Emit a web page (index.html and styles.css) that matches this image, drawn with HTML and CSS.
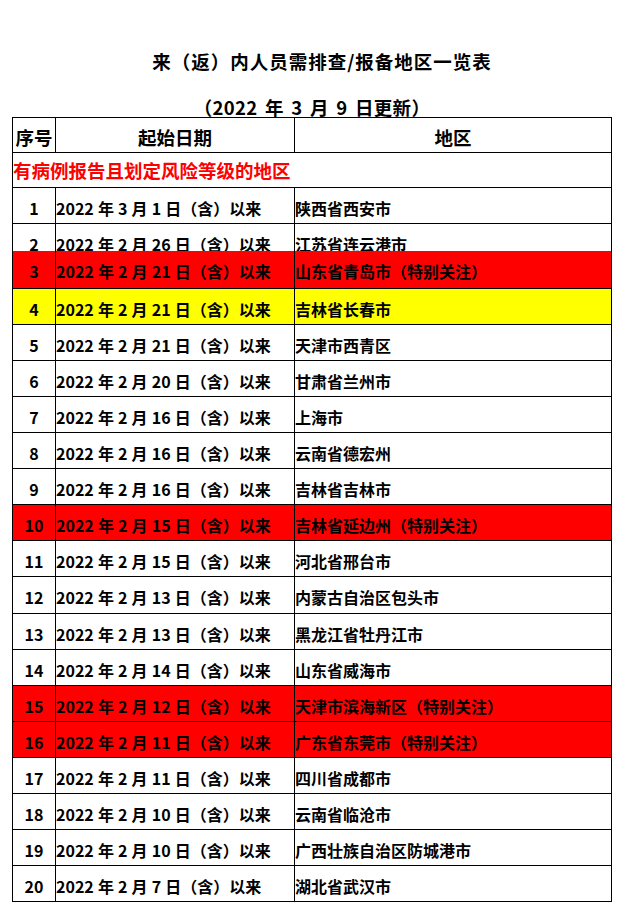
FILE: index.html
```html
<!DOCTYPE html>
<html lang="zh-CN">
<head>
<meta charset="utf-8">
<title>来（返）内人员需排查/报备地区一览表</title>
<link rel="stylesheet" href="styles.css">
</head>
<body>
<div class="page">
  <div class="title">来（返）内人员需排查/报备地区一览表</div>
  <div class="subtitle">（2022 年 3 月 9 日更新）</div>
  <div class="table">
    <div class="row head">
      <div class="cell c1">序号</div>
      <div class="cell c2">起始日期</div>
      <div class="cell c3">地区</div>
    </div>
    <div class="row section">
      <div class="cell full">有病例报告且划定风险等级的地区</div>
    </div>
    <div class="row"><div class="cell c1">1</div><div class="cell c2">2022 年 3 月 1 日（含）以来</div><div class="cell c3">陕西省西安市</div></div>
    <div class="row short"><div class="cell c1">2</div><div class="cell c2">2022 年 2 月 26 日（含）以来</div><div class="cell c3">江苏省连云港市</div></div>
    <div class="row red tall"><div class="cell c1">3</div><div class="cell c2">2022 年 2 月 21 日（含）以来</div><div class="cell c3">山东省青岛市（特别关注）</div></div>
    <div class="row yellow"><div class="cell c1">4</div><div class="cell c2">2022 年 2 月 21 日（含）以来</div><div class="cell c3">吉林省长春市</div></div>
    <div class="row"><div class="cell c1">5</div><div class="cell c2">2022 年 2 月 21 日（含）以来</div><div class="cell c3">天津市西青区</div></div>
    <div class="row"><div class="cell c1">6</div><div class="cell c2">2022 年 2 月 20 日（含）以来</div><div class="cell c3">甘肃省兰州市</div></div>
    <div class="row"><div class="cell c1">7</div><div class="cell c2">2022 年 2 月 16 日（含）以来</div><div class="cell c3">上海市</div></div>
    <div class="row"><div class="cell c1">8</div><div class="cell c2">2022 年 2 月 16 日（含）以来</div><div class="cell c3">云南省德宏州</div></div>
    <div class="row"><div class="cell c1">9</div><div class="cell c2">2022 年 2 月 16 日（含）以来</div><div class="cell c3">吉林省吉林市</div></div>
    <div class="row red"><div class="cell c1">10</div><div class="cell c2">2022 年 2 月 15 日（含）以来</div><div class="cell c3">吉林省延边州（特别关注）</div></div>
    <div class="row"><div class="cell c1">11</div><div class="cell c2">2022 年 2 月 15 日（含）以来</div><div class="cell c3">河北省邢台市</div></div>
    <div class="row plus"><div class="cell c1">12</div><div class="cell c2">2022 年 2 月 13 日（含）以来</div><div class="cell c3">内蒙古自治区包头市</div></div>
    <div class="row"><div class="cell c1">13</div><div class="cell c2">2022 年 2 月 13 日（含）以来</div><div class="cell c3">黑龙江省牡丹江市</div></div>
    <div class="row"><div class="cell c1">14</div><div class="cell c2">2022 年 2 月 14 日（含）以来</div><div class="cell c3">山东省威海市</div></div>
    <div class="row red"><div class="cell c1">15</div><div class="cell c2">2022 年 2 月 12 日（含）以来</div><div class="cell c3">天津市滨海新区（特别关注）</div></div>
    <div class="row red"><div class="cell c1">16</div><div class="cell c2">2022 年 2 月 11 日（含）以来</div><div class="cell c3">广东省东莞市（特别关注）</div></div>
    <div class="row"><div class="cell c1">17</div><div class="cell c2">2022 年 2 月 11 日（含）以来</div><div class="cell c3">四川省成都市</div></div>
    <div class="row"><div class="cell c1">18</div><div class="cell c2">2022 年 2 月 10 日（含）以来</div><div class="cell c3">云南省临沧市</div></div>
    <div class="row"><div class="cell c1">19</div><div class="cell c2">2022 年 2 月 10 日（含）以来</div><div class="cell c3">广西壮族自治区防城港市</div></div>
    <div class="row"><div class="cell c1">20</div><div class="cell c2">2022 年 2 月 7 日（含）以来</div><div class="cell c3">湖北省武汉市</div></div>
  </div>
</div>
</body>
</html>
```

FILE: styles.css
```css
html, body {
  margin: 0;
  padding: 0;
  background: #ffffff;
}

body {
  font-family: "Noto Sans CJK SC", "Noto Sans", sans-serif;
  font-weight: 700;
  color: #000000;
}

.page {
  width: 600px;
  margin-left: 12px;
  padding-top: 51px;
}

.title {
  font-size: 18.5px;
  line-height: 20px;
  height: 20px;
  text-align: center;
  letter-spacing: 1px;
  padding-left: 20px;
}

.subtitle {
  margin-top: 26px;
  font-size: 18.5px;
  line-height: 20px;
  height: 20px;
  text-align: center;
  word-spacing: 3px;
  letter-spacing: 0.3px;
}

.table {
  border-top: 1px solid #000;
  border-left: 1px solid #000;
  width: 599px;
}

.row {
  display: grid;
  grid-template-columns: 43px 239px 317px;
  height: 36px;
  border-bottom: 1px solid #000;
  box-sizing: border-box;
  overflow: hidden;
}

.cell {
  border-right: 1px solid #000;
  font-size: 16px;
  line-height: 20px;
  padding-top: 10px;
  white-space: nowrap;
  overflow: hidden;
}

.c1 {
  text-align: center;
}

.c2, .c3 {
  text-align: left;
}

.c2 {
  word-spacing: 0.5px;
}

.head {
  height: 35px;
}

.head .cell {
  font-size: 18.5px;
  padding-top: 9px;
}

.head .c2, .head .c3 {
  text-align: center;
}

.section {
  height: 35px;
  grid-template-columns: 599px;
}

.section .cell {
  font-size: 18.5px;
  padding-top: 7px;
  color: #ff0000;
}

.row.short {
  height: 27px;
  border-bottom: none;
}

.row.tall {
  height: 38px;
}

.row.plus {
  height: 37px;
}

.red {
  background: #ff0000;
}

.yellow {
  background: #ffff00;
}
```
